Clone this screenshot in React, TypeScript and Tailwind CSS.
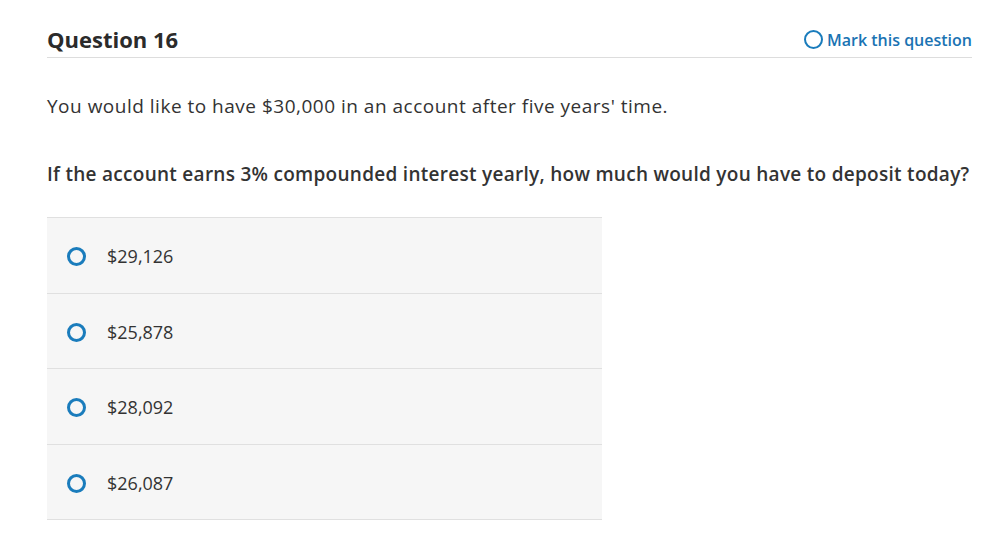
const options = ['$29,126', '$25,878', '$28,092', '$26,087'];

function Radio({ size = 19, stroke = 3 }: { size?: number; stroke?: number }) {
  const r = (size - stroke) / 2;
  return (
    <svg width={size} height={size} viewBox={`0 0 ${size} ${size}`} className="shrink-0">
      <circle cx={size / 2} cy={size / 2} r={r} fill="none" stroke="#1a7cbc" strokeWidth={stroke} />
    </svg>
  );
}

export default function App() {
  return (
    <div
      className="min-h-[534px] w-[1006px] bg-white text-[#333333]"
      style={{ fontFamily: '"Open Sans", Lato, sans-serif' }}
    >
      <div className="ml-[47px] w-[925px] pt-[25px]">
        <div className="flex items-center justify-between border-b border-[#dddddd] pb-[3px]">
          <h1 className="text-[22px] font-bold leading-[29px] text-[#2b2b2b]">Question 16</h1>
          <button className="flex items-center gap-[4px] text-[16px] font-semibold text-[#1a73b3]">
            <Radio size={19} stroke={2} />
            Mark this question
          </button>
        </div>

        <p className="mt-[35px] text-[19px] leading-[26px] tracking-[0.5px]">
          You would like to have $30,000 in an account after five years' time.
        </p>
        <p className="mt-[42px] whitespace-nowrap text-[19px] font-semibold leading-[26px] tracking-[0.28px]">
          If the account earns 3% compounded interest yearly, how much would you have to deposit today?
        </p>

        <div className="mt-[30px] w-[555px] border-t border-[#e0e0e0]">
          {options.map((o) => (
            <div
              key={o}
              className="flex h-[75.5px] items-center gap-[21px] border-b border-[#e0e0e0] bg-[#f6f6f6] pl-[20px] pt-[3px]"
            >
              <Radio />
              <span className="text-[18px]">{o}</span>
            </div>
          ))}
        </div>
      </div>
    </div>
  );
}
